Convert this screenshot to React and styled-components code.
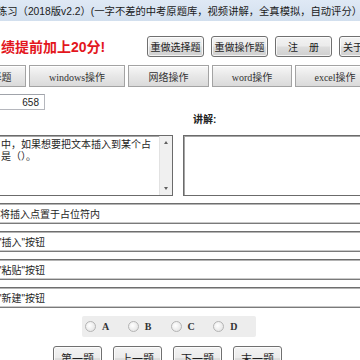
import styled, { createGlobalStyle } from "styled-components";

const GlobalStyle = createGlobalStyle`
  html, body {
    margin: 0;
    padding: 0;
    background: #ffffff;
  }
  body {
    width: 360px;
    height: 360px;
    overflow: hidden;
    font-family: "Liberation Sans", "Noto Sans CJK SC", sans-serif;
    color: #1e1e1e;
  }
`;

const Page = styled.div`
  width: 360px;
  height: 360px;
  overflow: hidden;
  background: #fff;
`;

const TitleBar = styled.div`
  height: 21px;
  display: flex;
  align-items: center;
  background: linear-gradient(#dfe9f5, #d2dfee);
  font-size: 10.3px;
  white-space: nowrap;
  overflow: hidden;
  color: #1a1a1a;
`;

const TitleText = styled.span`
  margin-left: -3px;
`;

const HeaderRow = styled.div`
  margin-top: 14px;
  height: 22px;
  display: flex;
  align-items: center;
  gap: 7px;
  white-space: nowrap;
`;

const Slogan = styled.div`
  flex: none;
  width: 139px;
  font-size: 14px;
  font-weight: bold;
  color: #e3161d;
  padding-left: 1px;
`;

const WinButton = styled.button`
  flex: none;
  width: ${(p) => p.$w || 57}px;
  height: ${(p) => p.$h || 21}px;
  padding: 0;
  border: 1px solid #707070;
  border-radius: 3px;
  background: linear-gradient(#f3f3f3 0%, #ebebeb 48%, #dddddd 52%, #cfcfcf 100%);
  box-shadow: inset 0 0 0 1px rgba(255, 255, 255, 0.75);
  font-family: "Liberation Sans", "Noto Sans CJK SC", sans-serif;
  font-size: ${(p) => p.$fs || 10}px;
  color: #1e1e1e;
  white-space: pre;
`;

const TabRow = styled.div`
  margin-top: 8px;
  height: 22px;
  display: flex;
  gap: 3px;
  white-space: nowrap;
`;

const Tab = styled.div`
  flex: none;
  width: ${(p) => p.$w}px;
  margin-left: ${(p) => p.$ml || 0}px;
  display: flex;
  align-items: center;
  justify-content: center;
  box-sizing: border-box;
  border: 1px solid #a3a3a3;
  background: linear-gradient(#f7f7f7, #e6e6e6 55%, #dadada);
  box-shadow: inset 0 1px 0 #fff;
  font-family: "Liberation Serif", "Noto Sans CJK SC", serif;
  font-size: 10px;
  color: #333;
`;

const FieldRow = styled.div`
  margin-top: 7px;
  height: 16px;
  display: flex;
`;

const NumberField = styled.div`
  margin-left: -10px;
  width: 55px;
  box-sizing: border-box;
  border: 1px solid #b5b7bd;
  border-top-color: #a0a3aa;
  display: flex;
  align-items: center;
  justify-content: flex-end;
  padding-right: 5px;
  font-size: 10px;
  color: #222;
`;

const LabelRow = styled.div`
  margin-top: 4px;
  height: 12px;
  padding-left: 193px;
  font-size: 10px;
  line-height: 12px;
  font-weight: bold;
  color: #222;
`;

const BoxRow = styled.div`
  margin-top: 9px;
  height: 61px;
  display: flex;
  gap: 10px;
`;

const QuestionBox = styled.div`
  flex: none;
  margin-left: -20px;
  width: 193px;
  box-sizing: border-box;
  border: 1px solid #6b6b6b;
  box-shadow: inset 1px 1px 0 #a5a5a5;
  display: flex;
  background: #fff;
`;

const QuestionText = styled.div`
  flex: 1;
  padding: 3px 0 0 20px;
  font-size: 10px;
  line-height: 12px;
  color: #1e1e1e;
  white-space: nowrap;
  overflow: hidden;
`;

const ScrollBar = styled.div`
  width: 12px;
  display: flex;
  flex-direction: column;
  justify-content: space-between;
  align-items: center;
  padding: 5px 0;
  background: #f0f0f0;
  border-left: 1px solid #e2e2e2;
`;

const Arrow = styled.div`
  width: 0;
  height: 0;
  border-left: 2.5px solid transparent;
  border-right: 2.5px solid transparent;
  border-${(p) => (p.$down ? "top" : "bottom")}: 3px solid #606060;
`;

const ExplainBox = styled.div`
  flex: none;
  width: 300px;
  box-sizing: border-box;
  border: 1px solid #6b6b6b;
  box-shadow: inset 1px 1px 0 #a5a5a5;
  background: #fff;
`;

const OptionList = styled.div`
  margin-top: 7px;
  display: flex;
  flex-direction: column;
  gap: 7px;
`;

const OptionRow = styled.div`
  margin-left: -10px;
  width: 390px;
  height: 21px;
  box-sizing: border-box;
  border-top: 1px solid #6e6e6e;
  border-bottom: 1px solid #7a7a7a;
  box-shadow: inset 0 1px 0 #b4b4b4, inset 0 -1px 0 #c9c9c9;
  display: flex;
  align-items: center;
  padding-left: ${(p) => p.$pl || 10}px;
  font-size: 10px;
  color: #1e1e1e;
  white-space: nowrap;
`;

const RadioGroup = styled.div`
  margin: 8px 0 0 82px;
  width: 174px;
  height: 21px;
  display: flex;
  align-items: center;
  padding-left: 3px;
  box-sizing: border-box;
  background: #ededed;
  border-radius: 2px;
`;

const RadioItem = styled.label`
  width: 48px;
  display: flex;
  align-items: center;
  gap: 6px;
  font-family: "Liberation Serif", serif;
  font-size: 10px;
  font-weight: bold;
  color: #333;
`;

const RadioDot = styled.span`
  width: 11px;
  height: 11px;
  box-sizing: border-box;
  border-radius: 50%;
  border: 1px solid #b4b4b4;
  background: radial-gradient(circle at 40% 40%, #ffffff, #dedede);
`;

const NavRow = styled.div`
  margin-top: 9px;
  padding-left: 53px;
  display: flex;
  gap: 11px;
`;

const options = [
  { text: "将插入点置于占位符内", pl: 10 },
  { text: "\"插入\"按钮", pl: 8 },
  { text: "\"粘贴\"按钮", pl: 8 },
  { text: "\"新建\"按钮", pl: 8 },
];

const tabs = [
  { label: "选择题", w: 59, ml: -33 },
  { label: "windows操作", w: 96 },
  { label: "网络操作", w: 81 },
  { label: "word操作", w: 80 },
  { label: "excel操作", w: 80 },
];

export default function App() {
  return (
    <Page>
      <GlobalStyle />
      <TitleBar>
        <TitleText>练习（2018版v2.2）(一字不差的中考原题库，视频讲解，全真模拟，自动评分）</TitleText>
      </TitleBar>

      <HeaderRow>
        <Slogan>绩提前加上20分!</Slogan>
        <WinButton>重做选择题</WinButton>
        <WinButton>重做操作题</WinButton>
        <WinButton>{"注    册"}</WinButton>
        <WinButton $w={28}>关于</WinButton>
      </HeaderRow>

      <TabRow>
        {tabs.map((t) => (
          <Tab key={t.label} $w={t.w} $ml={t.ml}>
            {t.label}
          </Tab>
        ))}
      </TabRow>

      <FieldRow>
        <NumberField>658</NumberField>
      </FieldRow>

      <LabelRow>讲解:</LabelRow>

      <BoxRow>
        <QuestionBox>
          <QuestionText>
            <div>中，如果想要把文本插入到某个占</div>
            <div>是（）。</div>
          </QuestionText>
          <ScrollBar>
            <Arrow />
            <Arrow $down />
          </ScrollBar>
        </QuestionBox>
        <ExplainBox />
      </BoxRow>

      <OptionList>
        {options.map((o) => (
          <OptionRow key={o.text} $pl={o.pl}>
            {o.text}
          </OptionRow>
        ))}
      </OptionList>

      <RadioGroup>
        {["A", "B", "C", "D"].map((l) => (
          <RadioItem key={l}>
            <RadioDot />
            {l}
          </RadioItem>
        ))}
      </RadioGroup>

      <NavRow>
        <WinButton $w={49} $h={24} $fs={11}>第一题</WinButton>
        <WinButton $w={49} $h={24} $fs={11}>上一题</WinButton>
        <WinButton $w={49} $h={24} $fs={11}>下一题</WinButton>
        <WinButton $w={49} $h={24} $fs={11}>末一题</WinButton>
      </NavRow>
    </Page>
  );
}
